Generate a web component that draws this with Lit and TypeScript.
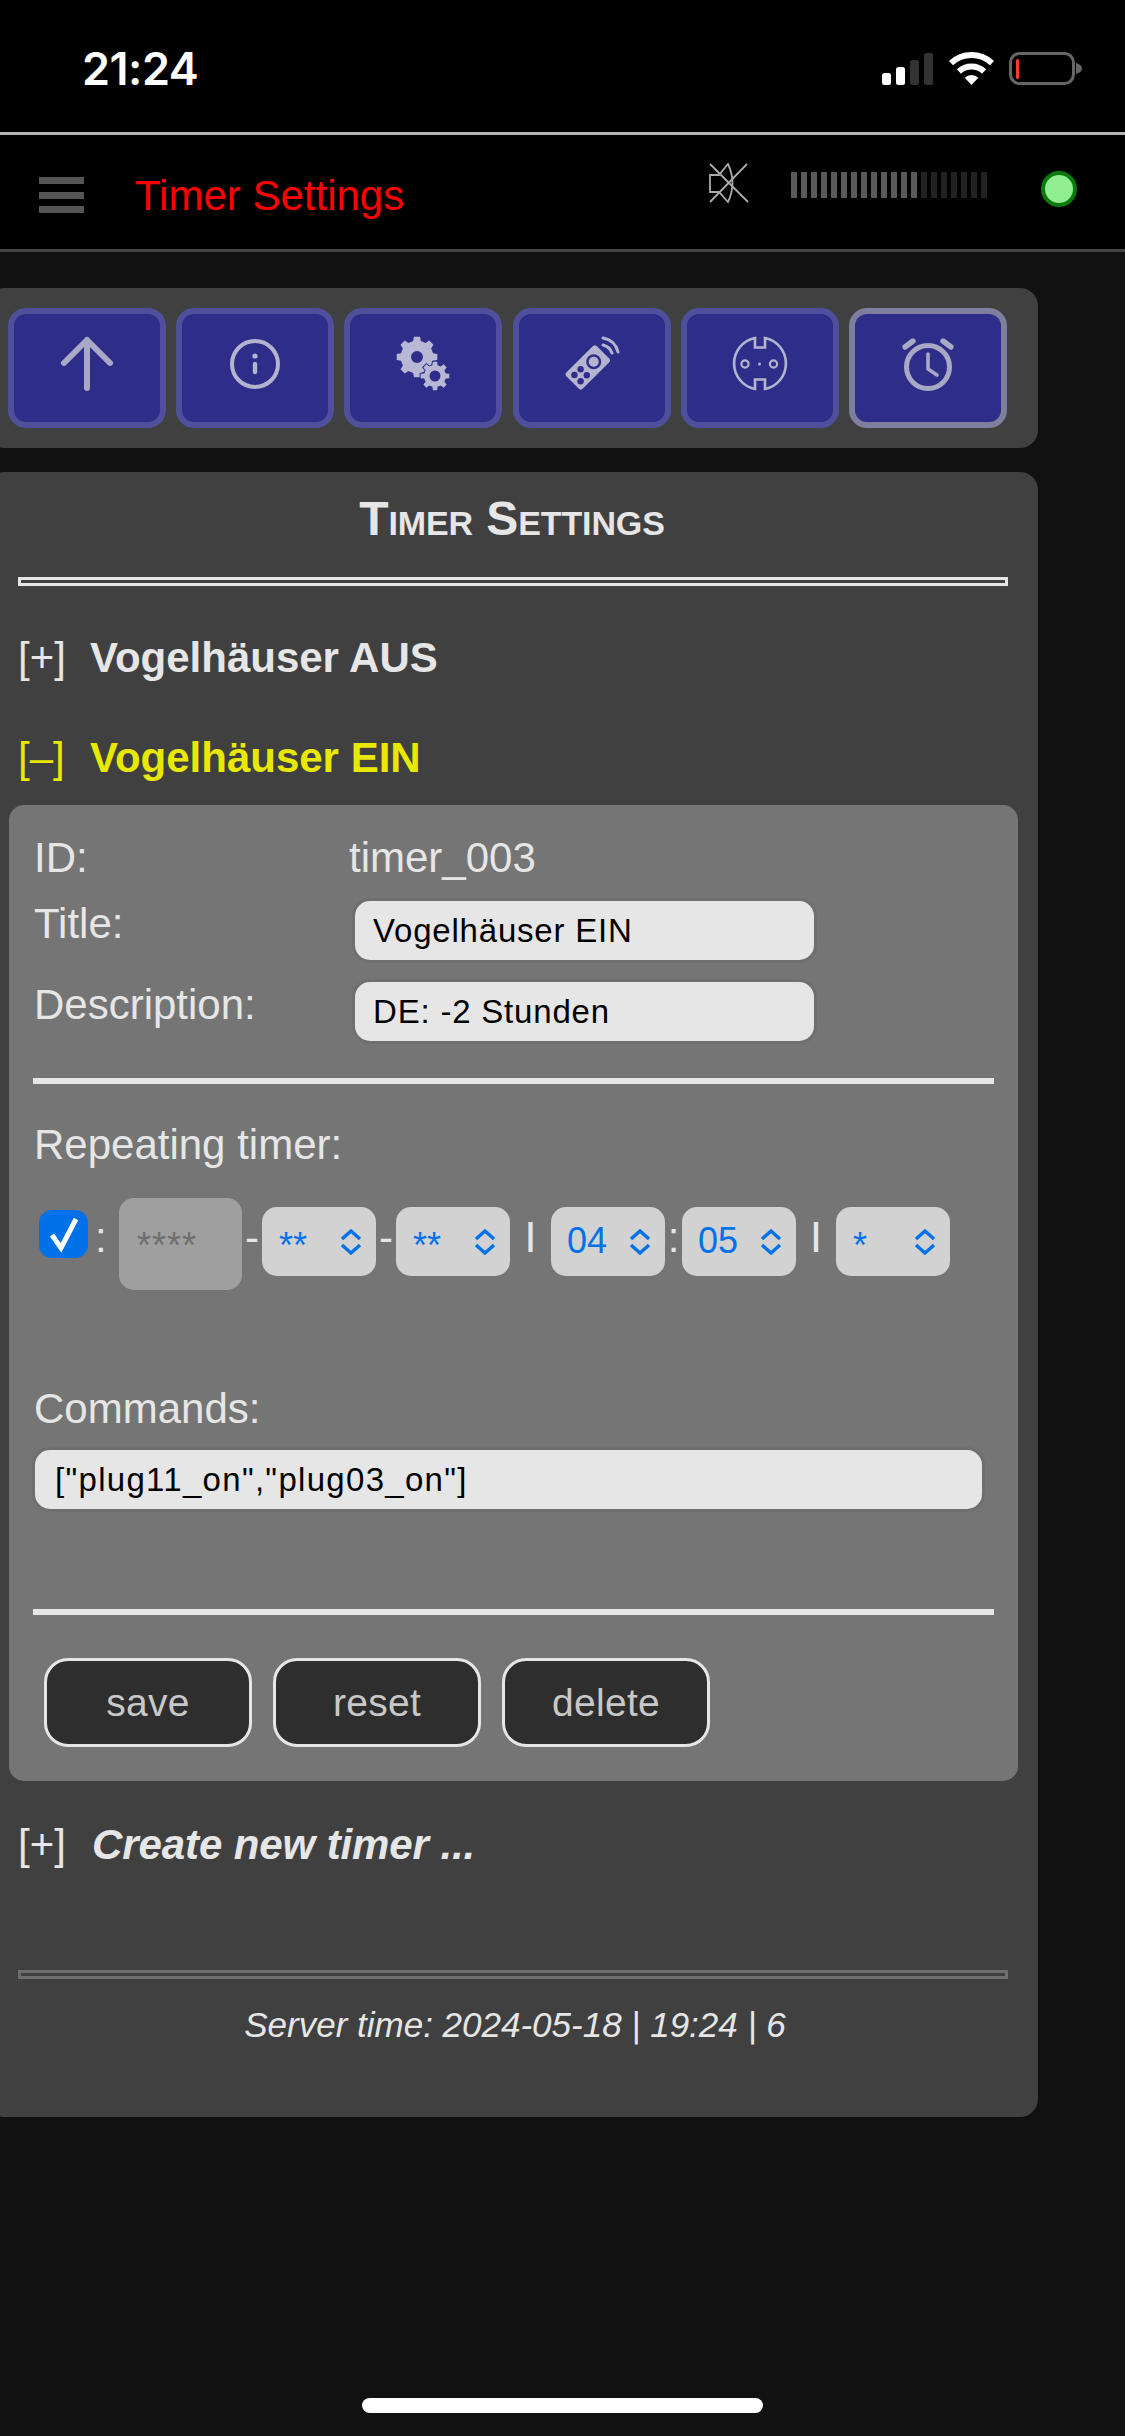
import { LitElement, html, css, svg } from 'lit';
import { customElement } from 'lit/decorators.js';

// builds a cog outline with a round hole, the two gears only differ by size
function gear(cx: number, cy: number, outer: number, root: number, hole: number, teeth = 8, start = 0) {
  const pts: string[] = [];
  const step = (Math.PI * 2) / teeth;
  for (let i = 0; i < teeth; i++) {
    const a = start + i * step - Math.PI / 2;
    const at = (r: number, o: number) =>
      `${(cx + r * Math.cos(a + o * step)).toFixed(2)} ${(cy + r * Math.sin(a + o * step)).toFixed(2)}`;
    pts.push(at(root, -0.3), at(outer, -0.19), at(outer, 0.19), at(root, 0.3));
  }
  return `M${pts.join('L')}Z M${cx - hole} ${cy}a${hole} ${hole} 0 1 0 ${hole * 2} 0a${hole} ${hole} 0 1 0 ${-hole * 2} 0Z`;
}

const ICONS = [
  svg`<path d="M40 60V12M17 35L40 12L63 35" fill="none" stroke="#a9a9c6" stroke-width="6" stroke-linecap="round" stroke-linejoin="round"/>`,
  svg`<circle cx="40" cy="36" r="23" fill="none" stroke="#b4b4d0" stroke-width="4"/>
      <circle cx="40" cy="28" r="2.6" fill="#b4b4d0"/>
      <path d="M40 36V44" stroke="#b4b4d0" stroke-width="4.4" stroke-linecap="round"/>`,
  svg`<path d=${gear(34, 29, 20.5, 16.5, 6)} fill="#b8b8d6" fill-rule="evenodd"/>
      <path d=${gear(52, 48, 14.5, 11, 5.5)} fill="#b8b8d6" fill-rule="evenodd" stroke="#2e2e8a" stroke-width="2" paint-order="stroke"/>`,
  svg`<rect x="24.3" y="17.9" width="23" height="43" rx="3" transform="rotate(45 35.8 39.4)" fill="#b4b4d0"/>
      <circle cx="41.7" cy="33.7" r="7.5" fill="#2e2e8a"/><circle cx="41.7" cy="33.7" r="5" fill="#b4b4d0"/>
      <g fill="#2e2e8a"><circle cx="28.6" cy="41.3" r="3.2"/><circle cx="22.4" cy="47" r="3.2"/><circle cx="34.8" cy="47.3" r="3.2"/><circle cx="28.6" cy="53.3" r="3.2"/></g>
      <path d="M51 17Q58 19 60 25M51 10Q63 12 66 24" fill="none" stroke="#b4b4d0" stroke-width="3" stroke-linecap="round"/>`,
  svg`<path d="M45 10V19.5H35V10A26 26 0 0 0 35 61V51.5H45V61A26 26 0 0 0 45 10Z" fill="none" stroke="#b4b4d0" stroke-width="2.6"/>
      <circle cx="25" cy="36" r="3.6" fill="none" stroke="#b4b4d0" stroke-width="2.2"/>
      <circle cx="53.5" cy="36" r="3.6" fill="none" stroke="#b4b4d0" stroke-width="2.2"/>
      <circle cx="39.5" cy="36" r="1.5" fill="#b4b4d0"/>`,
  svg`<circle cx="40" cy="39" r="21.5" fill="none" stroke="#a9a9c6" stroke-width="5"/>
      <path d="M40 26V41L49 47" fill="none" stroke="#a9a9c6" stroke-width="3.6" stroke-linecap="round" stroke-linejoin="round"/>
      <path d="M17 19L25 13M63 19L55 13" stroke="#a9a9c6" stroke-width="5.4" stroke-linecap="round"/>`,
];

const chevrons = html`<svg class="chev" width="22" height="26" viewBox="0 0 22 26">
  <path d="M2 10L11 2L20 10M2 16L11 24L20 16" fill="none" stroke="#0071e8" stroke-width="3.4"/>
</svg>`;

@customElement('app-root')
export class AppRoot extends LitElement {
  static styles = css`
    :host {
      display: block;
      position: relative;
      height: 2436px;
      overflow: hidden;
      background: #111;
      color: #e6e6e6;
      font-family: "Liberation Sans", Arial, sans-serif;
      font-size: 42px;
    }
    .status {
      height: 132px;
      background: #000;
      border-bottom: 3px solid #b3b3b3;
      box-sizing: content-box;
      display: flex;
      justify-content: space-between;
      align-items: flex-start;
      padding: 0 43px 0 82px;
    }
    .clock {
      margin-top: 44px;
      font: 600 45px/50px Inter, sans-serif;
      color: #fff;
      letter-spacing: -0.5px;
    }
    .status-icons { margin-top: 52px; }
    .header {
      height: 114px;
      background: #000;
      border-bottom: 3px solid #444;
      display: flex;
      align-items: flex-start;
    }
    .burger {
      width: 45px;
      margin: 42px 0 0 39px;
      display: flex;
      flex-direction: column;
      gap: 7.5px;
    }
    .burger i { display: block; height: 7px; background: #555; }
    .page-title {
      margin: 31px auto 0 51px;
      line-height: 60px;
      color: #f00;
    }
    .speaker { margin: 28px 42px 0 0; }
    .level { display: flex; gap: 4px; margin: 37px 54px 0 0; }
    .level i { display: block; width: 6px; height: 26px; background: #5a5a5a; }
    .level i.off { background: #222; }
    .dot {
      width: 36px;
      height: 36px;
      box-sizing: border-box;
      margin: 36px 48px 0 0;
      border-radius: 50%;
      background: #90ee90;
      border: 4px solid #0a7a0a;
    }
    .panel {
      width: 1052px;
      margin-left: -14px;
      background: #404040;
      border-radius: 18px;
    }
    .nav {
      margin-top: 36px;
      height: 160px;
      box-sizing: border-box;
      padding: 20px 0 0 22px;
      display: flex;
      gap: 10.2px;
    }
    .nav-btn {
      width: 158px;
      height: 120px;
      box-sizing: border-box;
      border: 6px solid #4f4f9b;
      border-radius: 18px;
      background: #2e2e8a;
      display: flex;
      align-items: center;
      justify-content: center;
    }
    .nav-btn.active { border-color: #7e7e9e; }
    .settings {
      margin-top: 24px;
      padding: 17px 0 68px;
    }
    h1 {
      margin: 0;
      font-size: 48px;
      line-height: 60px;
      font-weight: bold;
      font-variant: small-caps;
      letter-spacing: -0.1px;
      text-align: center;
    }
    .rule {
      height: 9px;
      box-sizing: border-box;
      margin: 0 30px 0 32px;
      border: 3px solid #e6e6e6;
    }
    .rule.top { margin-top: 28px; }
    .rule.bottom { margin-top: 95.5px; border-color: #6e6e6e; }
    .row {
      display: flex;
      line-height: 60px;
      margin-left: 32px;
    }
    .row .toggle { width: 72px; }
    .row b { font-weight: bold; }
    .row.aus { margin-top: 42px; }
    .row.ein { margin-top: 40px; color: #e8e800; }
    .row.create { margin-top: 33.5px; }
    .row.create b { font-style: italic; margin-left: 2px; letter-spacing: -0.1px; }
    .card {
      margin: 17px 20px 0 23px;
      padding: 28.5px 24px 34px;
      background: #757575;
      border-radius: 15px;
    }
    .field {
      display: flex;
      line-height: 48px;
    }
    .field label { width: 316px; margin-left: 1px; }
    .id-row span { margin-left: -1px; }
    .title-row { margin-top: 16.5px; }
    .desc-row { margin-top: 19px; }
    .title-row label, .desc-row label { line-height: 51px; }
    .field input { margin: 3px 0 0 5px; width: 459px; }
    input {
      display: block;
      height: 59px;
      box-sizing: border-box;
      padding: 0 18px;
      border: none;
      border-radius: 15px;
      background: #e6e6e6;
      box-shadow: 0 0 0 3px #6f6f6f;
      color: #000;
      font: 33px/57px "Liberation Sans", Arial, sans-serif;
      letter-spacing: 0.8px;
      outline: none;
    }
    .line {
      height: 6px;
      background: #e6e6e6;
    }
    .line.first { margin-top: 37px; }
    .line.second { margin-top: 100px; }
    .caption { margin: 0 0 0 1px; line-height: 48px; font-weight: normal; font-size: 42px; }
    .caption.repeat { margin-top: 35px; line-height: 52px; }
    .caption.commands { margin-top: 93px; line-height: 51px; }
    .timer {
      margin-top: 27px;
      height: 92px;
      display: flex;
      align-items: flex-start;
    }
    .check {
      width: 49px;
      height: 48px;
      margin: 12px 0 0 6px;
      border-radius: 13px;
      background: #0071e8;
      display: flex;
      align-items: center;
      justify-content: center;
    }
    .sep {
      line-height: 79px;
      text-align: center;
      flex: none;
    }
    .sep.first { text-align: left; padding-left: 7px; box-sizing: border-box; }
    .sep.bar { font-size: 32px; line-height: 72px; font-weight: bold; }
    .sel {
      flex: none;
      width: 114px;
      height: 69px;
      margin-top: 9px;
      box-sizing: border-box;
      padding: 0 14px 0 16px;
      border-radius: 15px;
      background: #d2d2d2;
      color: #0071e8;
      font-size: 36px;
      line-height: 67px;
      display: flex;
      justify-content: space-between;
    }
    .sel.stars { line-height: 77px; padding-left: 17px; }
    .chev { flex: none; margin-top: 22px; }
    .sel.off {
      width: 123px;
      height: 92px;
      margin-top: 0;
      padding-left: 18px;
      background: #9f9f9f;
      color: #6e6e6e;
      line-height: 95px;
      letter-spacing: 1px;
    }
    .cmd { margin: 16px 0 0 2px; width: 947px; padding-left: 20px; letter-spacing: 1.3px; }
    .actions {
      margin: 43px 0 0 11px;
      display: flex;
      gap: 21px;
    }
    button {
      width: 208px;
      height: 89px;
      box-sizing: border-box;
      border: 3px solid #e6e6e6;
      border-radius: 24px;
      background: #2e2e2e;
      color: #c8c8c8;
      font: 39px "Liberation Sans", Arial, sans-serif;
      letter-spacing: 0.3px;
      padding: 0;
    }
    .server {
      margin: 22px 0 0 6px;
      font-size: 35px;
      line-height: 48px;
      font-style: italic;
      text-align: center;
    }
    .home {
      position: absolute;
      left: 362px;
      top: 2398px;
      width: 401px;
      height: 15px;
      border-radius: 8px;
      background: #fff;
    }
  `;

  private sel(value: string, stars = false) {
    return html`<div class="sel ${stars ? 'stars' : ''}"><span>${value}</span>${chevrons}</div>`;
  }

  private sep(text: string, width: number, kind = '') {
    return html`<span class="sep ${kind}" style="width:${width}px">${text}</span>`;
  }

  render() {
    const bars = Array.from({ length: 20 }, (_, i) => i < 13);
    return html`
      <div class="status">
        <div class="clock">21:24</div>
        <svg class="status-icons" width="200" height="33" viewBox="0 0 200 33">
          <rect x="0" y="21" width="9" height="12" rx="2.5" fill="#fff"/>
          <rect x="14" y="15" width="9" height="18" rx="2.5" fill="#fff"/>
          <rect x="28" y="8" width="9" height="25" rx="2.5" fill="#333"/>
          <rect x="42" y="1" width="9" height="32" rx="2.5" fill="#333"/>
          <path d="M69 11.1A30 30 0 0 1 110 11.1M76.9 19.5A18.5 18.5 0 0 1 102.1 19.5" fill="none" stroke="#fff" stroke-width="6"/>
          <path d="M89.5 33L82.7 25.7A10 10 0 0 1 96.3 25.7Z" fill="#fff"/>
          <rect x="128.5" y="1.5" width="63" height="30" rx="9" fill="none" stroke="#666" stroke-width="3"/>
          <rect x="134" y="7" width="3" height="20" rx="1.5" fill="#ff3b30"/>
          <path d="M194 11C198 12 200 14 200 16.5C200 19 198 21 194 22Z" fill="#666"/>
        </svg>
      </div>
      <div class="header">
        <div class="burger"><i></i><i></i><i></i></div>
        <div class="page-title">Timer Settings</div>
        <svg class="speaker" width="40" height="40" viewBox="0 0 40 40" fill="none" stroke="#aaa" stroke-width="1.8">
          <path d="M19 1L10 12H1V29H10L19 39Q28 20 19 1Z"/>
          <path d="M1 1L39 39M38 1L1 39"/>
        </svg>
        <div class="level">${bars.map((on) => html`<i class=${on ? '' : 'off'}></i>`)}</div>
        <div class="dot"></div>
      </div>

      <div class="panel nav">
        ${ICONS.map(
          (icon, i) => html`<div class="nav-btn ${i === 5 ? 'active' : ''}">
            <svg width="80" height="80" viewBox="0 0 80 80">${icon}</svg>
          </div>`
        )}
      </div>

      <div class="panel settings">
        <h1>Timer Settings</h1>
        <div class="rule top"></div>
        <div class="row aus"><span class="toggle">[+]</span><b>Vogelhäuser AUS</b></div>
        <div class="row ein"><span class="toggle">[–]</span><b>Vogelhäuser EIN</b></div>
        <div class="card">
          <div class="field id-row"><label>ID:</label><span>timer_003</span></div>
          <div class="field title-row"><label>Title:</label><input .value=${'Vogelhäuser EIN'} /></div>
          <div class="field desc-row"><label>Description:</label><input .value=${'DE: -2 Stunden'} /></div>
          <div class="line first"></div>
          <h2 class="caption repeat">Repeating timer:</h2>
          <div class="timer">
            <div class="check">
              <svg width="34" height="38" viewBox="0 0 34 38"><path d="M5 20L14 33L29 4" fill="none" stroke="#fff" stroke-width="5"/></svg>
            </div>
            ${this.sep(':', 31, 'first')}
            <div class="sel off"><span>****</span></div>
            ${this.sep('-', 20)}
            ${this.sel('**', true)}
            ${this.sep('-', 20)}
            ${this.sel('**', true)}
            ${this.sep('|', 41, 'bar')}
            ${this.sel('04')}
            ${this.sep(':', 17)}
            ${this.sel('05')}
            ${this.sep('|', 40, 'bar')}
            ${this.sel('*', true)}
          </div>
          <h2 class="caption commands">Commands:</h2>
          <input class="cmd" .value=${'["plug11_on","plug03_on"]'} />
          <div class="line second"></div>
          <div class="actions">
            <button>save</button>
            <button>reset</button>
            <button>delete</button>
          </div>
        </div>
        <div class="row create"><span class="toggle">[+]</span><b>Create new timer ...</b></div>
        <div class="rule bottom"></div>
        <div class="server">Server time: 2024-05-18 | 19:24 | 6</div>
      </div>
      <div class="home"></div>
    `;
  }
}
